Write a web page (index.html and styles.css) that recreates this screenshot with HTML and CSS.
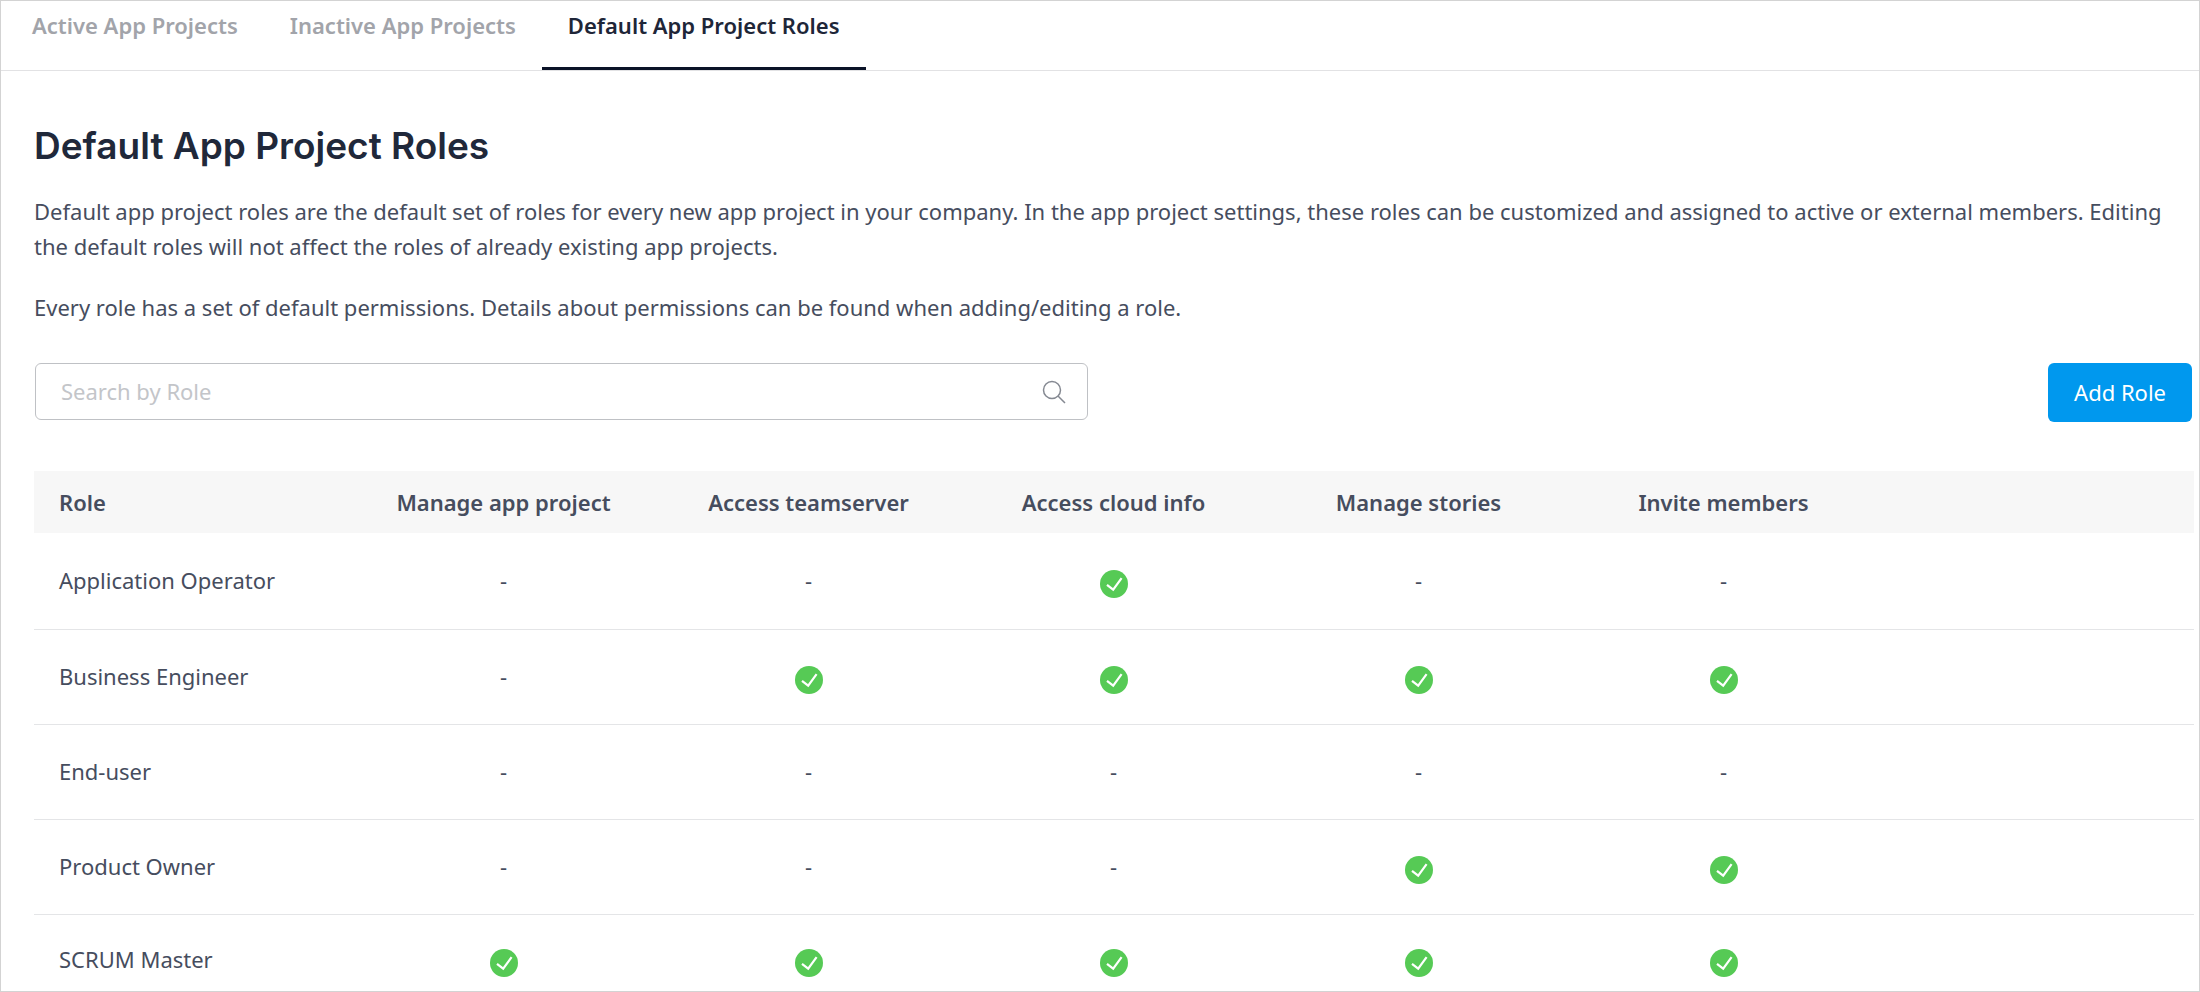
FILE: index.html
```html
<!DOCTYPE html>
<html lang="en">
<head>
<meta charset="utf-8">
<title>Default App Project Roles</title>
<link rel="stylesheet" href="styles.css">
</head>
<body>
<svg class="sprite" aria-hidden="true">
  <symbol id="check" viewBox="0 0 28 28">
    <circle cx="14" cy="14" r="14" fill="#56ca55"/>
    <path d="M7 14.800 13.200 19.600 21.600 8.200" fill="none" stroke="#fff" stroke-width="2.200"/>
  </symbol>
</svg>
<div class="frame">
  <nav class="tabs">
    <a class="tab" href="#active">Active App Projects</a>
    <a class="tab" href="#inactive">Inactive App Projects</a>
    <a class="tab tab-current" href="#roles" aria-current="page">Default App Project Roles</a>
  </nav>
  <main class="content">
    <h1 class="title">Default App Project Roles</h1>
    <p class="text">Default app project roles are the default set of roles for every new app project in your company. In the app project settings, these roles can be customized and assigned to active or external members. Editing the default roles will not affect the roles of already existing app projects.</p>
    <p class="text">Every role has a set of default permissions. Details about permissions can be found when adding/editing a role.</p>
    <div class="toolbar">
      <label class="search">
        <input class="search-input" type="text" placeholder="Search by Role" aria-label="Search by Role">
        <svg class="search-icon" viewBox="0 0 24 24" aria-hidden="true"><path d="M10 1.500a8.500 8.500 0 1 0 0 17a8.500 8.500 0 1 0 0-17M16 16l7 7" fill="none" stroke="#858992" stroke-width="1.500"/></svg>
      </label>
      <button class="add" type="button">Add Role</button>
    </div>
    <table class="roles">
      <colgroup><col class="col-role"><col class="col-perm" span="5"><col></colgroup>
      <thead>
        <tr><th scope="col">Role</th><th scope="col">Manage app project</th><th scope="col">Access teamserver</th><th scope="col">Access cloud info</th><th scope="col">Manage stories</th><th scope="col">Invite members</th><td></td></tr>
      </thead>
      <tbody>
        <tr><td>Application Operator</td><td>-</td><td>-</td><td><svg class="check" role="img" aria-label="Yes"><use href="#check"/></svg></td><td>-</td><td>-</td><td></td></tr>
        <tr><td>Business Engineer</td><td>-</td><td><svg class="check" role="img" aria-label="Yes"><use href="#check"/></svg></td><td><svg class="check" role="img" aria-label="Yes"><use href="#check"/></svg></td><td><svg class="check" role="img" aria-label="Yes"><use href="#check"/></svg></td><td><svg class="check" role="img" aria-label="Yes"><use href="#check"/></svg></td><td></td></tr>
        <tr><td>End-user</td><td>-</td><td>-</td><td>-</td><td>-</td><td>-</td><td></td></tr>
        <tr><td>Product Owner</td><td>-</td><td>-</td><td>-</td><td><svg class="check" role="img" aria-label="Yes"><use href="#check"/></svg></td><td><svg class="check" role="img" aria-label="Yes"><use href="#check"/></svg></td><td></td></tr>
        <tr><td>SCRUM Master</td><td><svg class="check" role="img" aria-label="Yes"><use href="#check"/></svg></td><td><svg class="check" role="img" aria-label="Yes"><use href="#check"/></svg></td><td><svg class="check" role="img" aria-label="Yes"><use href="#check"/></svg></td><td><svg class="check" role="img" aria-label="Yes"><use href="#check"/></svg></td><td><svg class="check" role="img" aria-label="Yes"><use href="#check"/></svg></td><td></td></tr>
      </tbody>
    </table>
  </main>
</div>
</body>
</html>
```
FILE: styles.css
```css
* { box-sizing: border-box; }
body {
  margin: 0;
  background: #fff;
  color: #464d5e;
  font-family: "Noto Sans", sans-serif;
  font-size: 22px;
  line-height: 35px;
}
.sprite { display: none; }
.frame {
  height: 100vh;
  overflow: hidden;
  border: 1px solid #d3d3d3;
}
.tabs {
  display: flex;
  height: 70px;
  padding-left: 5px;
  border-bottom: 1px solid #e2e2e4;
}
.tab {
  padding: 7px 26px 0;
  border-bottom: 3px solid transparent;
  color: #a2a4aa;
  font-weight: 600;
  text-decoration: none;
}
.tab-current { border-color: #0b1328; color: #1e2638; }
.content { padding: 50px 5px 0 33px; }
.title {
  margin: 0 0 23px;
  color: #20283a;
  font-family: Inter, sans-serif;
  font-size: 37px;
  font-weight: 600;
  line-height: 50px;
}
.text { margin: 0 0 26px; }
.toolbar {
  display: flex;
  align-items: flex-start;
  justify-content: space-between;
  margin: 38px 2px 49px 1px;
}
.search {
  display: flex;
  align-items: center;
  width: calc(49% - 4px);
  height: 57px;
  padding: 0 21px 0 25px;
  border: 1px solid #bfc1c5;
  border-radius: 6px;
}
.search-input {
  flex: 1;
  min-width: 0;
  padding: 0;
  border: 0;
  outline: 0;
  background: none;
  color: inherit;
  font: inherit;
}
.search-input::placeholder { color: #c3c5c9; opacity: 1; }
.search-icon { width: 24px; height: 24px; }
.add {
  height: 59px;
  padding: 0 26px;
  border: 0;
  border-radius: 6px;
  background: #0098ee;
  color: #fff;
  font: inherit;
}
.roles {
  width: 100%;
  table-layout: fixed;
  border-collapse: collapse;
  text-align: center;
}
.col-role { width: 317px; }
.col-perm { width: 305px; }
.roles thead { background: #f7f7f7; }
.roles th { height: 62px; padding: 0; font-weight: 600; }
.roles td { height: 96px; padding: 0; border-bottom: 1px solid #e4e5e7; }
.roles thead td { height: 62px; border: 0; }
.roles tr > :first-child { padding-left: 25px; text-align: left; }
.roles tbody tr:nth-child(n+2) td { height: 95px; }
.roles tbody tr:last-child td { height: 90px; }
.check { display: inline-block; width: 28px; height: 28px; margin-top: 2px; vertical-align: middle; }
```
